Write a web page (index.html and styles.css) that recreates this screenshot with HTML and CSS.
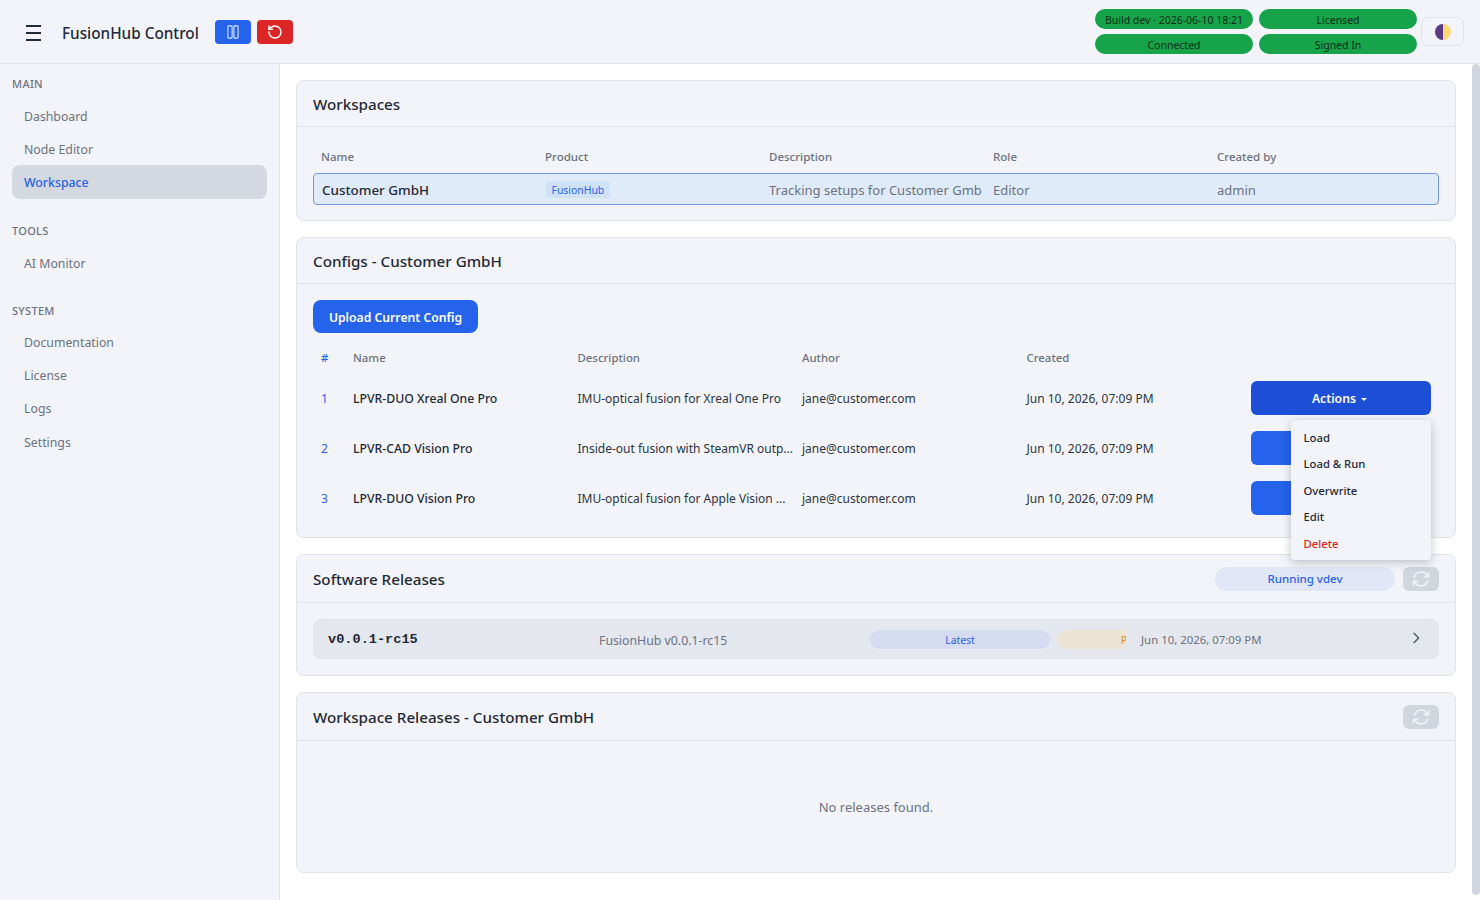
FILE: index.html
```html
<!DOCTYPE html>
<html lang="en">
<head>
    <meta charset="UTF-8">
    <meta name="viewport" content="width=device-width, initial-scale=1.0">
    <title>FusionHub Control</title>
    <link rel="stylesheet" href="styles.css">
</head>
<body>
    <header class="topbar">
        <button class="menu-btn" aria-label="Menu">
            <svg width="24" height="24" viewBox="0 0 24 24" fill="none" stroke="currentColor" stroke-width="2"><path d="M5 6h15M5 13h15M5 20h15"/></svg>
        </button>
        <div class="brand">FusionHub Control</div>
        <button class="icon-btn blue" aria-label="Pause">
            <svg width="16" height="16" viewBox="0 0 16 16" fill="none" stroke="#dbe6fd" stroke-width="1.1"><rect x="2.9" y="1.900" width="4.200" height="12.200" rx=".8"/><rect x="8.900" y="1.900" width="4.200" height="12.200" rx=".8"/></svg>
        </button>
        <button class="icon-btn red" aria-label="Restart">
            <svg width="16" height="16" viewBox="0 0 24 24" fill="none" stroke="currentColor" stroke-width="2.2" stroke-linecap="round" stroke-linejoin="round"><path d="M3 12a9 9 0 1 0 9-9 9.75 9.75 0 0 0-6.74 2.74L3 8"/><path d="M3 3v5h5"/></svg>
        </button>
        <div class="status-grid">
            <span class="pill">Build dev · 2026-06-10 18:21</span>
            <span class="pill">Licensed</span>
            <span class="pill">Connected</span>
            <span class="pill">Signed In</span>
        </div>
        <button class="theme-btn" aria-label="Theme"><span class="theme-dot"></span></button>
    </header>

    <div class="layout">
        <aside class="sidebar">
            <div class="nav-title">MAIN</div>
            <a class="nav-item">Dashboard</a>
            <a class="nav-item">Node Editor</a>
            <a class="nav-item active">Workspace</a>
            <div class="nav-title tools">TOOLS</div>
            <a class="nav-item">AI Monitor</a>
            <div class="nav-title system">SYSTEM</div>
            <a class="nav-item">Documentation</a>
            <a class="nav-item">License</a>
            <a class="nav-item">Logs</a>
            <a class="nav-item">Settings</a>
        </aside>

        <main class="content">
            <section class="card workspaces">
                <div class="card-head"><h2>Workspaces</h2></div>
                <div class="card-body">
                    <div class="ws-grid ws-labels">
                        <span>Name</span><span>Product</span><span>Description</span><span>Role</span><span>Created by</span>
                    </div>
                    <div class="ws-grid ws-row">
                        <span class="ws-name">Customer GmbH</span>
                        <span><span class="product">FusionHub</span></span>
                        <span>Tracking setups for Customer Gmb</span>
                        <span>Editor</span>
                        <span>admin</span>
                    </div>
                </div>
            </section>

            <section class="card configs">
                <div class="card-head"><h2>Configs - Customer GmbH</h2></div>
                <div class="card-body">
                    <button class="upload-btn">Upload Current Config</button>
                    <div class="cfg-grid cfg-labels">
                        <span class="num">#</span><span>Name</span><span>Description</span><span>Author</span><span>Created</span><span></span>
                    </div>
                    <div class="cfg-grid cfg-row">
                        <span class="num">1</span>
                        <span class="cfg-name">LPVR-DUO Xreal One Pro</span>
                        <span class="cfg-desc">IMU-optical fusion for Xreal One Pro</span>
                        <span>jane@customer.com</span>
                        <span>Jun 10, 2026, 07:09 PM</span>
                        <button class="actions-btn open">Actions <i class="caret"></i></button>
                    </div>
                    <div class="cfg-grid cfg-row">
                        <span class="num">2</span>
                        <span class="cfg-name">LPVR-CAD Vision Pro</span>
                        <span class="cfg-desc">Inside-out fusion with SteamVR outp...</span>
                        <span>jane@customer.com</span>
                        <span>Jun 10, 2026, 07:09 PM</span>
                        <button class="actions-btn"></button>
                    </div>
                    <div class="cfg-grid cfg-row">
                        <span class="num">3</span>
                        <span class="cfg-name">LPVR-DUO Vision Pro</span>
                        <span class="cfg-desc">IMU-optical fusion for Apple Vision ...</span>
                        <span>jane@customer.com</span>
                        <span>Jun 10, 2026, 07:09 PM</span>
                        <button class="actions-btn"></button>
                    </div>
                    <ul class="dropdown">
                        <li>Load</li>
                        <li>Load &amp; Run</li>
                        <li>Overwrite</li>
                        <li>Edit</li>
                        <li class="danger">Delete</li>
                    </ul>
                </div>
            </section>

            <section class="card releases">
                <div class="card-head split">
                    <h2>Software Releases</h2>
                    <div class="head-tools">
                        <span class="running">Running vdev</span>
                        <button class="refresh-btn" aria-label="Refresh">
                            <svg width="20" height="20" viewBox="0 0 24 24" fill="none" stroke="currentColor" stroke-width="1.8" stroke-linecap="round" stroke-linejoin="round"><path d="M16.023 9.348h4.992M2.985 19.644v-4.992m0 0h4.992m-4.993 0 3.181 3.183a8.25 8.25 0 0 0 13.803-3.7M4.031 9.865a8.25 8.25 0 0 1 13.803-3.7l3.181 3.182m0-4.991v4.990"/></svg>
                        </button>
                    </div>
                </div>
                <div class="card-body">
                    <div class="release-row">
                        <span class="version">v0.0.1-rc15</span>
                        <span class="release-name">FusionHub v0.0.1-rc15</span>
                        <span class="badge latest">Latest</span>
                        <span class="badge-clip"><span class="badge pre">Pre-release</span></span>
                        <span class="release-date">Jun 10, 2026, 07:09 PM</span>
                        <svg class="chevron" width="16" height="16" viewBox="0 0 24 24" fill="none" stroke="currentColor" stroke-width="2" stroke-linecap="round" stroke-linejoin="round"><path d="m9 5 7 7-7 7"/></svg>
                    </div>
                </div>
            </section>

            <section class="card ws-releases">
                <div class="card-head split">
                    <h2>Workspace Releases - Customer GmbH</h2>
                    <div class="head-tools">
                        <button class="refresh-btn" aria-label="Refresh">
                            <svg width="20" height="20" viewBox="0 0 24 24" fill="none" stroke="currentColor" stroke-width="1.8" stroke-linecap="round" stroke-linejoin="round"><path d="M16.023 9.348h4.992M2.985 19.644v-4.992m0 0h4.992m-4.993 0 3.181 3.183a8.25 8.25 0 0 0 13.803-3.7M4.031 9.865a8.25 8.25 0 0 1 13.803-3.7l3.181 3.182m0-4.991v4.990"/></svg>
                        </button>
                    </div>
                </div>
                <div class="empty">No releases found.</div>
            </section>
        </main>
    </div>
    <div class="scroll-thumb"></div>
</body>
</html>
```
FILE: styles.css
```css
* {
    box-sizing: border-box;
}

body {
    margin: 0;
    height: 100vh;
    overflow: hidden;
    display: flex;
    flex-direction: column;
    background: #fff;
    color: #1f2937;
    font-family: "Noto Sans", sans-serif;
    font-size: 13px;
}

button {
    font-family: inherit;
    border: 0;
    padding: 0;
}

/* top bar */
.topbar {
    height: 64px;
    flex: none;
    display: flex;
    align-items: center;
    background: #f3f4f9;
    border-bottom: 1px solid #e1e3ea;
    padding: 0 16px 0 21px;
}

.menu-btn {
    width: 24px;
    height: 24px;
    background: none;
    color: #1f2937;
}

.brand {
    width: 137px;
    margin-left: 17px;
    margin-right: 16px;
    padding-top: 2px;
    font-size: 15.300px;
    font-weight: 500;
    white-space: nowrap;
    color: #1f2937;
}

.icon-btn {
    width: 36px;
    height: 24px;
    border-radius: 4px;
    color: #fff;
    display: flex;
    align-items: center;
    justify-content: center;
    margin-right: 6px;
}

.icon-btn.blue { background: #2563eb; }
.icon-btn.red { background: #dc2626; }

.status-grid {
    margin-left: auto;
    display: grid;
    grid-template-columns: 158px 158px;
    gap: 5px 6px;
}

.pill {
    height: 20px;
    border-radius: 10px;
    background: #16a34a;
    color: #052e16;
    font-size: 10.500px;
    line-height: 22px;
    text-align: center;
    white-space: nowrap;
}

.theme-btn {
    width: 43px;
    height: 29px;
    margin-left: 4px;
    background: #f3f4f9;
    border: 1px solid #e1e3ea;
    border-radius: 6px;
    display: flex;
    align-items: center;
    justify-content: center;
}

.theme-dot {
    width: 16px;
    height: 16px;
    border-radius: 50%;
    background: linear-gradient(90deg, #5b3a86 0 50%, #fcd977 50% 100%);
}

.layout {
    flex: 1;
    display: flex;
    min-height: 0;
}

/* sidebar */
.sidebar {
    width: 280px;
    flex: none;
    background: #f3f4f9;
    border-right: 1px solid #e1e3ea;
    padding: 13px 12px;
    font-size: 12.300px;
}

.nav-title {
    font-size: 11px;
    line-height: 15px;
    font-weight: 500;
    letter-spacing: .3px;
    color: #6b7280;
    margin-top: -1px;
    margin-bottom: 8px;
}

.nav-title.tools { margin-top: 24px; margin-bottom: 8px; }
.nav-title.system { margin-top: 24px; margin-bottom: 7px; }

.nav-item {
    display: block;
    height: 33.300px;
    line-height: 36px;
    padding: 0 12px;
    border-radius: 8px;
    color: #6b7280;
}

.nav-item.active {
    height: 33.500px;
    margin-top: -.5px;
    line-height: 35px;
    background: #d4d8e1;
    color: #2563eb;
    font-weight: 500;
}

/* main column */
.content {
    flex: 1;
    overflow: hidden;
    padding: 16px 24px 16px 16px;
    display: flex;
    flex-direction: column;
    gap: 16px;
}

.scroll-thumb {
    position: absolute;
    top: 64px;
    right: 0;
    width: 8px;
    height: 831px;
    background: #d1d5de;
    border-radius: 4px;
}

.card {
    flex: none;
    background: #f3f4f9;
    border: 1px solid #e1e3ea;
    border-radius: 8px;
    position: relative;
}

.card-head {
    height: 46px;
    padding: 0 16px;
    display: flex;
    align-items: center;
    border-bottom: 1px solid #e1e3ea;
}

.card-head.split {
    justify-content: space-between;
    height: 48px;
}

.card-head h2 {
    margin: 0;
    font-size: 15.200px;
    font-weight: 500;
    color: #1f2937;
}

.card-body {
    padding: 16px;
}

.workspaces { height: 141px; }
.configs { height: 301px; }
.releases { height: 122px; }
.ws-releases { height: 181px; }

/* workspace table */
.ws-grid {
    display: grid;
    grid-template-columns: 224px 224px 224px 224px 1fr;
    align-items: center;
}

.ws-grid > span { padding: 0 8px; white-space: nowrap; }

.ws-labels {
    height: 30px;
    padding-bottom: 3px;
    font-size: 11.500px;
    font-weight: 500;
    color: #6b7280;
}

.ws-row {
    grid-template-columns: 223px 224px 224px 224px 1fr;
    height: 32px;
    background: #e0ebf9;
    border: 1px solid #6f97ee;
    border-radius: 4px;
    color: #6b7280;
    line-height: 20px;
    padding-top: 1px;
}

.ws-name {
    font-size: 13.400px;
    color: #1f2937;
    font-weight: 500;
}

.product {
    display: inline-block;
    height: 17px;
    line-height: 19px;
    margin: -3px 0 0 1px;
    padding: 0 5.500px;
    border-radius: 3px 3px 0 0;
    overflow: hidden;
    font-size: 10.400px;
    color: #2563eb;
    background: #cfe2f8;
    vertical-align: middle;
}

/* config table */
.upload-btn {
    display: block;
    width: 165px;
    height: 33px;
    padding-top: 1px;
    background: #2563eb;
    color: #fff;
    border-radius: 8px;
    font-size: 12.200px;
    font-weight: 600;
}

.cfg-grid {
    display: grid;
    grid-template-columns: 32px 224.500px 224.500px 224.500px 224.500px 1fr;
    align-items: center;
    font-size: 12px;
    color: #2b3442;
}

.cfg-grid > span { padding: 0 8px; white-space: nowrap; overflow: hidden; }

.cfg-labels {
    height: 32px;
    margin-top: 8px;
    font-size: 11.400px;
    font-weight: 500;
    color: #6b7280;
}

.cfg-row {
    height: 50px;
}

.num { color: #2563eb; }
.cfg-labels .num { color: #2563eb; }

.cfg-name {
    font-size: 12.250px;
    font-weight: 500;
    color: #1f2937;
}

.actions-btn {
    justify-self: end;
    margin-right: 8px;
    width: 180px;
    height: 34px;
    border-radius: 6px;
    background: #2563eb;
    color: #fff;
    font-size: 12.200px;
    font-weight: 600;
}

.actions-btn.open { background: #1d4ed8; padding-right: 3px; }

.caret {
    display: inline-block;
    width: 0;
    height: 0;
    margin-left: 2px;
    vertical-align: 2px;
    border-left: 3px solid transparent;
    border-right: 3px solid transparent;
    border-top: 3px solid #fff;
}

.dropdown {
    position: absolute;
    top: 182px;
    right: 24px;
    width: 140px;
    height: 140px;
    margin: 0;
    padding: 5px 0 3px;
    list-style: none;
    background: #f3f4f9;
    border-radius: 4px;
    box-shadow: 0 2px 10px rgba(31, 41, 55, .28);
    z-index: 5;
    font-size: 11.300px;
    font-weight: 500;
    color: #1f2937;
}

.dropdown li {
    height: 26.400px;
    line-height: 26.400px;
    padding: 0 12.500px;
}

.dropdown .danger { color: #dc2626; }

/* releases */
.head-tools {
    display: flex;
    align-items: center;
    gap: 8px;
}

.running {
    width: 180px;
    height: 24px;
    line-height: 24px;
    text-align: center;
    border-radius: 12px;
    background: #e1e7f6;
    color: #2563eb;
    font-size: 11.500px;
    font-weight: 500;
}

.refresh-btn {
    width: 36px;
    height: 24px;
    border-radius: 6px;
    background: #d1d5de;
    color: #f3f4f9;
    display: flex;
    align-items: center;
    justify-content: center;
}

.release-row {
    height: 40px;
    display: flex;
    align-items: center;
    background: #e5e7ef;
    border: 1px solid #e1e3ea;
    border-radius: 8px;
    padding: 0 15px 0 14px;
    position: relative;
}

.version {
    width: 271px;
    flex: none;
    font-family: "Liberation Mono", monospace;
    font-weight: 700;
    font-size: 13.600px;
    color: #1f2937;
}

.release-name {
    width: 271px;
    flex: none;
    padding-top: 2px;
    font-size: 12.300px;
    color: #6b7280;
}

.badge {
    display: block;
    height: 19px;
    line-height: 20px;
    border-radius: 10px;
    font-size: 10.400px;
    text-align: center;
    flex: none;
}

.latest {
    width: 180px;
    background: #d5dbf1;
    color: #2563eb;
}

.badge-clip {
    width: 68px;
    margin-left: 8px;
    flex: none;
    overflow: hidden;
}

.pre {
    width: 180px;
    background: #ebe4d3;
    color: #e38a00;
}

.release-date {
    margin-left: 15px;
    font-size: 11.400px;
    color: #6b7280;
}

.chevron {
    position: absolute;
    right: 14px;
    top: 10px;
    color: #4b5563;
}

.empty {
    height: 132px;
    display: flex;
    align-items: center;
    justify-content: center;
    color: #6b7280;
}
```
